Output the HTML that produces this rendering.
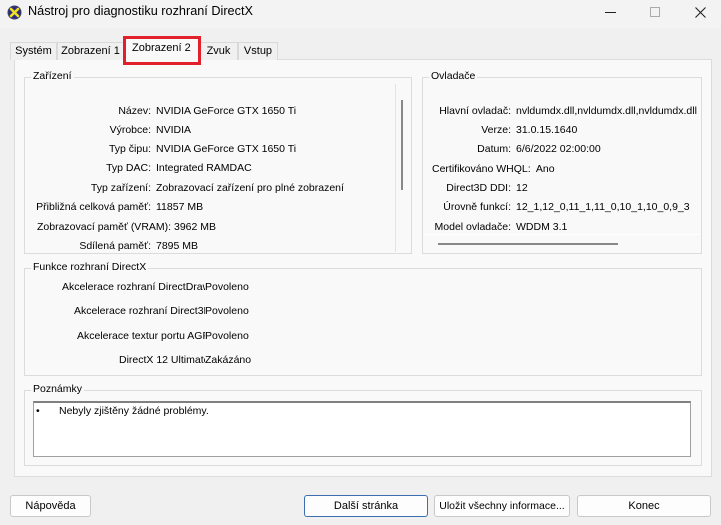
<!DOCTYPE html>
<html><head><meta charset="utf-8"><style>
*{box-sizing:border-box;margin:0;padding:0}
body{width:721px;height:525px;background:#f0f0f0;font-family:"Liberation Sans",sans-serif;font-size:10.5px;color:#000;position:relative;overflow:hidden}
.a{position:absolute;white-space:nowrap}
.tab{position:absolute;top:42px;height:18px;border:1px solid #d9d9d9;border-bottom:none;background:#f0f0f0;text-align:center;line-height:16px;font-size:11px;white-space:nowrap}
.grp{position:absolute;border:1px solid #dcdcdc}
.gt{position:absolute;top:-8px;left:6px;background:#f9f9f9;padding:0 2px;font-size:10.5px;white-space:nowrap}
.r{position:absolute;text-align:right;white-space:nowrap}
.btn{position:absolute;top:495px;height:22px;border:1px solid #c8c8c8;border-radius:3px;background:#fdfdfd;text-align:center;line-height:20px;font-size:11px;white-space:nowrap;overflow:hidden}
.cl{position:absolute;white-space:nowrap;overflow:hidden}
</style></head><body>
<div class="a" style="left:0;top:0;width:721px;height:28px;background:#f3f3f3"></div>
<svg class="a" style="left:7px;top:5px" width="15" height="15" viewBox="0 0 15 15"><circle cx="7.5" cy="7.5" r="7" fill="#3a3a6a"/><circle cx="7.5" cy="7.5" r="5.5" fill="#2a2a80"/><path d="M4 4 L11 11 M11 4 L4 11" stroke="#f0e020" stroke-width="2.6" stroke-linecap="round"/></svg>
<div class="a" style="left:28px;top:4px;font-size:12.7px">Nástroj pro diagnostiku rozhraní DirectX</div>
<div class="a" style="left:605px;top:12px;width:11px;height:1px;background:#222"></div>
<div class="a" style="left:650px;top:7px;width:10px;height:10px;border:1px solid #aaa"></div>
<svg class="a" style="left:695px;top:7px" width="11" height="11"><path d="M0.5 0.5L10.5 10.5M10.5 0.5L0.5 10.5" stroke="#222" stroke-width="1.1"/></svg>

<div class="a" style="left:14px;top:59px;width:698px;height:418px;background:#f9f9f9;border:1px solid #dcdcdc"></div>
<div class="tab" style="left:10px;width:47px">Systém</div>
<div class="tab" style="left:57px;width:67px">Zobrazení 1</div>
<div class="tab" style="left:199px;width:39px">Zvuk</div>
<div class="tab" style="left:238px;width:40px">Vstup</div>
<div class="tab" style="left:124px;top:38px;width:75px;height:22px;background:#f9f9f9;line-height:19px"></div>
<div class="a" style="left:123px;top:36px;width:78px;height:29px;border:3px solid #e0202a"></div>
<div class="a" style="left:132px;top:42px;font-size:11px">Zobrazení 2</div>

<div class="grp" style="left:24px;top:77px;width:388px;height:177px"><div class="gt">Zařízení</div></div>
<div class="a" style="left:395px;top:84px;width:1px;height:168px;background:#e4e4e4"></div>
<div class="a" style="left:401px;top:100px;width:2px;height:90px;background:#888"></div>
<div class="r" style="left:20px;width:131px;top:105px">Název:</div><div class="a" style="left:156px;top:105px">NVIDIA GeForce GTX 1650 Ti</div>
<div class="r" style="left:20px;width:131px;top:124px">Výrobce:</div><div class="a" style="left:156px;top:124px">NVIDIA</div>
<div class="r" style="left:20px;width:131px;top:143px">Typ čipu:</div><div class="a" style="left:156px;top:143px">NVIDIA GeForce GTX 1650 Ti</div>
<div class="r" style="left:20px;width:131px;top:162px">Typ DAC:</div><div class="a" style="left:156px;top:162px">Integrated RAMDAC</div>
<div class="r" style="left:20px;width:131px;top:182px">Typ zařízení:</div><div class="a" style="left:156px;top:182px">Zobrazovací zařízení pro plné zobrazení</div>
<div class="r" style="left:20px;width:131px;top:201px">Přibližná celková paměť:</div><div class="a" style="left:156px;top:201px">11857 MB</div>
<div class="a" style="left:37px;top:221px">Zobrazovací paměť (VRAM): 3962 MB</div>
<div class="r" style="left:20px;width:131px;top:240px">Sdílená paměť:</div><div class="a" style="left:156px;top:240px">7895 MB</div>

<div class="grp" style="left:422px;top:77px;width:280px;height:177px"><div class="gt">Ovladače</div></div>
<div class="cl" style="left:425px;top:100px;width:274px;height:133px">
<div class="r" style="left:0;width:86px;top:5px">Hlavní ovladač:</div><div class="a" style="left:91px;top:5px">nvldumdx.dll,nvldumdx.dll,nvldumdx.dll</div>
<div class="r" style="left:0;width:86px;top:24px">Verze:</div><div class="a" style="left:91px;top:24px">31.0.15.1640</div>
<div class="r" style="left:0;width:86px;top:43px">Datum:</div><div class="a" style="left:91px;top:43px">6/6/2022 02:00:00</div>
<div class="a" style="left:7px;top:63px">Certifikováno WHQL:&nbsp; Ano</div>
<div class="r" style="left:0;width:86px;top:82px">Direct3D DDI:</div><div class="a" style="left:91px;top:82px">12</div>
<div class="r" style="left:0;width:86px;top:101px">Úrovně funkcí:</div><div class="a" style="left:91px;top:101px">12_1,12_0,11_1,11_0,10_1,10_0,9_3</div>
<div class="r" style="left:0;width:86px;top:121px">Model ovladače:</div><div class="a" style="left:91px;top:121px">WDDM 3.1</div>
</div>
<div class="a" style="left:424px;top:234px;width:276px;height:1px;background:#fff"></div>
<div class="a" style="left:438px;top:243px;width:180px;height:2px;background:#888"></div>

<div class="grp" style="left:24px;top:268px;width:678px;height:108px"><div class="gt">Funkce rozhraní DirectX</div></div>
<div class="cl" style="left:62px;top:281px;width:143px">Akcelerace rozhraní DirectDraw</div><div class="a" style="left:205px;top:281px">Povoleno</div>
<div class="cl" style="left:74px;top:305px;width:131px">Akcelerace rozhraní Direct3D</div><div class="a" style="left:205px;top:305px">Povoleno</div>
<div class="cl" style="left:77px;top:330px;width:128px">Akcelerace textur portu AGP</div><div class="a" style="left:205px;top:330px">Povoleno</div>
<div class="cl" style="left:119px;top:354px;width:86px">DirectX 12 Ultimate</div><div class="a" style="left:205px;top:354px">Zakázáno</div>

<div class="grp" style="left:24px;top:390px;width:678px;height:76px"><div class="gt">Poznámky</div></div>
<div class="a" style="left:33px;top:401px;width:658px;height:56px;background:#fff;border:1px solid #a0a0a0;border-top:2px solid #808080"></div>
<div class="a" style="left:36px;top:405px">•</div>
<div class="a" style="left:59px;top:405px">Nebyly zjištěny žádné problémy.</div>

<div class="btn" style="left:10px;width:81px">Nápověda</div>
<div class="btn" style="left:304px;width:124px;border-color:#3b6fb0">Další stránka</div>
<div class="btn" style="left:434px;width:136px;font-size:10.5px">Uložit všechny informace...</div>
<div class="btn" style="left:577px;width:134px">Konec</div>
</body></html>
